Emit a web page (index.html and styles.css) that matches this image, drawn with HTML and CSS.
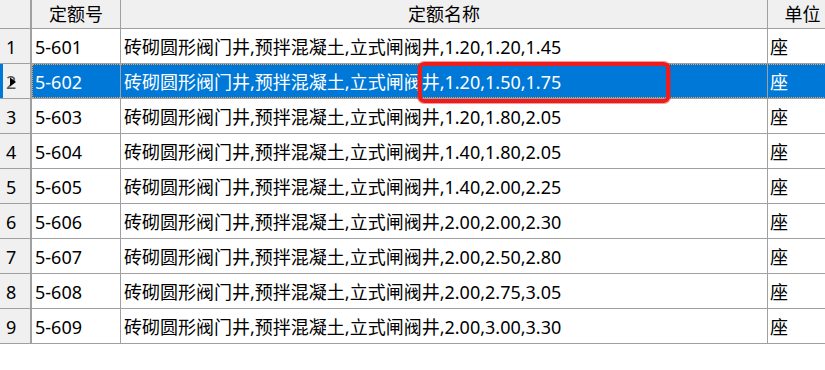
FILE: index.html
```html
<!DOCTYPE html>
<html lang="zh">
<head>
<meta charset="utf-8">
<title>定额</title>
<link rel="stylesheet" href="styles.css">
</head>
<body>
<div class="grid">
  <div class="row head">
    <div class="rn"></div>
    <div class="c1 hc">定额号</div>
    <div class="c2 hc">定额名称</div>
    <div class="c3 hc">单位</div>
  </div>
  <div class="row"><div class="rn">1</div><div class="c1">5-601</div><div class="c2">砖砌圆形阀门井,预拌混凝土,立式闸阀井,1.20,1.20,1.45</div><div class="c3">座</div></div>
  <div class="row sel"><div class="rn">2<svg class="ind" width="8" height="10" viewBox="0 0 8 10"><path d="M1 0.5 L7 5 L1 9.5 Z" fill="#000"/></svg></div><div class="c1">5-602</div><div class="c2">砖砌圆形阀门井,预拌混凝土,立式闸阀井,1.20,1.50,1.75</div><div class="c3">座</div></div>
  <div class="row"><div class="rn">3</div><div class="c1">5-603</div><div class="c2">砖砌圆形阀门井,预拌混凝土,立式闸阀井,1.20,1.80,2.05</div><div class="c3">座</div></div>
  <div class="row"><div class="rn">4</div><div class="c1">5-604</div><div class="c2">砖砌圆形阀门井,预拌混凝土,立式闸阀井,1.40,1.80,2.05</div><div class="c3">座</div></div>
  <div class="row"><div class="rn">5</div><div class="c1">5-605</div><div class="c2">砖砌圆形阀门井,预拌混凝土,立式闸阀井,1.40,2.00,2.25</div><div class="c3">座</div></div>
  <div class="row"><div class="rn">6</div><div class="c1">5-606</div><div class="c2">砖砌圆形阀门井,预拌混凝土,立式闸阀井,2.00,2.00,2.30</div><div class="c3">座</div></div>
  <div class="row"><div class="rn">7</div><div class="c1">5-607</div><div class="c2">砖砌圆形阀门井,预拌混凝土,立式闸阀井,2.00,2.50,2.80</div><div class="c3">座</div></div>
  <div class="row"><div class="rn">8</div><div class="c1">5-608</div><div class="c2">砖砌圆形阀门井,预拌混凝土,立式闸阀井,2.00,2.75,3.05</div><div class="c3">座</div></div>
  <div class="row"><div class="rn">9</div><div class="c1">5-609</div><div class="c2">砖砌圆形阀门井,预拌混凝土,立式闸阀井,2.00,3.00,3.30</div><div class="c3">座</div></div>
</div>
<div class="mark"></div>
</body>
</html>
```
FILE: styles.css
```css
html, body {
  margin: 0;
  padding: 0;
  background: #ffffff;
  overflow: hidden;
}
body {
  width: 825px;
  height: 370px;
  position: relative;
  font-family: "Noto Sans", "Noto Sans CJK SC", sans-serif;
  font-size: 18px;
  color: #000;
}
.grid {
  width: 838px;
  display: flex;
  flex-direction: column;
}
.row {
  display: flex;
  height: 35px;
  position: relative;
}
.row > div {
  box-sizing: border-box;
  border-right: 1px solid #a0a0a0;
  border-bottom: 1px solid #a0a0a0;
  display: flex;
  align-items: center;
  white-space: nowrap;
  overflow: hidden;
  padding-top: 2px;
  line-height: 1;
}
.row .rn {
  width: 32px;
  border-right: 2px solid #a0a0a0;
  background: #f0f0f0;
  padding-left: 6px;
  position: relative;
}
.row .c1 { width: 89px; padding-left: 3px; }
.row .c2 { width: 647px; padding-left: 3px; }
.row .c3 { width: 70px; padding-left: 2px; }

.row.head {
  height: 29px;
}
.row.head > div {
  background: #f0f0f0;
  padding-top: 0;
  padding-bottom: 1px;
}
.row.head .hc {
  justify-content: center;
  padding-left: 0;
}

.row.sel .c1,
.row.sel .c2,
.row.sel .c3 {
  background: #0078d7;
  color: #ffffff;
}
.row.sel .rn {
  box-shadow: inset 3px 0 0 #0078d7;
  color: #555;
}
.row.sel::after {
  content: "";
  position: absolute;
  left: 32px;
  right: 0;
  top: 0;
  bottom: 1px;
  border: 1px dotted #f5a04a;
  pointer-events: none;
}
.ind {
  position: absolute;
  left: 9px;
  top: 13px;
}

.mark {
  position: absolute;
  left: 418px;
  top: 62px;
  width: 252px;
  height: 41px;
  box-sizing: border-box;
  border: 4px solid #ee1d1d;
  border-radius: 6px;
  box-shadow: 0 0 0 1px rgba(238, 29, 29, 0.45);
}
```
